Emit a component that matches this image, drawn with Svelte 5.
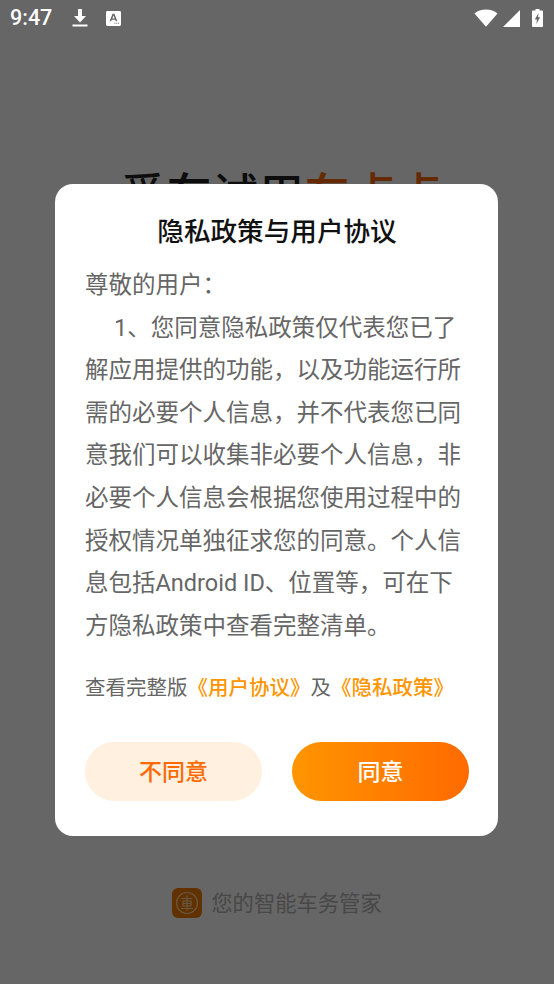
<script>
  const paragraph = '1、您同意隐私政策仅代表您已了解应用提供的功能，以及功能运行所需的必要个人信息，并不代表您已同意我们可以收集非必要个人信息，非必要个人信息会根据您使用过程中的授权情况单独征求您的同意。个人信息包括Android ID、位置等，可在下方隐私政策中查看完整清单。';
</script>

<div class="screen">
  <main class="page">
    <h2 class="headline">爱车试用<span class="accent">车点点</span></h2>
    <footer class="brand">
      <svg class="logo" viewBox="0 0 30 30" aria-hidden="true">
        <rect width="30" height="30" rx="6" fill="#f57c00" />
        <circle cx="15" cy="15" r="10.500" fill="none" stroke="#ffd9a8" stroke-width="1.200" />
        <path d="M9.500 10.500h11M15 7.500v15M11 13h8v5h-8zM11 15.500h8M9 20.500h12" fill="none" stroke="#ffd9a8" stroke-width="1.200" />
      </svg>
      <span>您的智能车务管家</span>
    </footer>
  </main>

  <div class="scrim"></div>

  <header class="status">
    <div class="status-left">
      <span class="time">9:47</span>
      <svg class="dl" viewBox="0 0 16 18" aria-hidden="true">
        <path d="M6 0h4v7h4l-6 6.500L2 7h4zM0.500 15.600h15V17.400H0.500z" fill="#fff" />
      </svg>
      <svg class="note" viewBox="0 0 16 16" aria-hidden="true">
        <path fill-rule="evenodd" d="M1.500 0h13A1.500 1.500 0 0 1 16 1.500v13a1.500 1.500 0 0 1-1.500 1.500h-13A1.500 1.500 0 0 1 0 14.500v-13A1.500 1.500 0 0 1 1.500 0zM7 3 3.800 11h1.700l.6-1.700h3.700l.6 1.700h1.700L9 3zM8 4.900 9.300 8H6.700zM9 12.500h1v1H9zM11 12.500h1v1h-1zM13 12.500h1v1h-1z" fill="#fff" />
      </svg>
    </div>
    <div class="status-right">
      <svg class="wifi" viewBox="0 0 24 18" aria-hidden="true">
        <path d="M0.500 4.600C3.500 2 7.500 0.500 12 0.500s8.500 1.500 11.500 4.100L12 17.800z" fill="#fff" />
      </svg>
      <svg class="signal" viewBox="0 0 17 17" aria-hidden="true">
        <path d="M17 0v17H0z" fill="#fff" />
      </svg>
      <svg class="battery" viewBox="0 0 11 18" aria-hidden="true">
        <path fill-rule="evenodd" d="M3.500 0h4v1.500H10a1 1 0 0 1 1 1V17a1 1 0 0 1-1 1H1a1 1 0 0 1-1-1V2.500a1 1 0 0 1 1-1h2.500zM6.500 4 2.800 10.500h2.200L4.300 15 8.200 8.300H6z" fill="#fff" />
      </svg>
    </div>
  </header>

  <div class="dialog-layer">
    <section class="dialog" role="dialog" aria-label="隐私政策与用户协议">
      <h1 class="title">隐私政策与用户协议</h1>
      <p class="greeting">尊敬的用户：</p>
      <p class="body">{paragraph}</p>
      <p class="links">查看完整版<span class="link">《用户协议》</span>及<span class="link">《隐私政策》</span></p>
      <div class="actions">
        <button class="btn decline" type="button">不同意</button>
        <button class="btn accept" type="button">同意</button>
      </div>
    </section>
  </div>
</div>

<style>
  :global(body) {
    margin: 0;
    background: #fff;
  }

  .screen {
    position: relative;
    width: 554px;
    height: 984px;
    overflow: hidden;
    font-family: Roboto, "Noto Sans CJK SC", sans-serif;
  }

  .page {
    display: flex;
    flex-direction: column;
    align-items: center;
    height: 100%;
    box-sizing: border-box;
    padding-top: 164px;
    padding-left: 8px;
    background: #fff;
  }

  .headline {
    margin: 0;
    font-size: 46px;
    line-height: 62px;
    font-weight: 500;
    color: #222;
    white-space: nowrap;
  }

  .accent {
    color: #ff6a00;
  }

  .brand {
    display: flex;
    align-items: center;
    gap: 9px;
    margin-top: 663px;
    margin-left: -8px;
    font-size: 21.300px;
    line-height: 30px;
    color: #b4b4b4;
  }

  .logo {
    width: 30px;
    height: 30px;
    margin-top: -2px;
  }

  .scrim {
    position: absolute;
    inset: 0;
    background: rgba(0, 0, 0, 0.6);
  }

  .status {
    position: absolute;
    top: 0;
    left: 0;
    right: 0;
    height: 36px;
    display: flex;
    align-items: center;
    justify-content: space-between;
    padding: 0 11px 0 10px;
    color: #fff;
  }

  .status-left,
  .status-right {
    display: flex;
    align-items: center;
  }

  .time {
    font-size: 21.500px;
    font-weight: 500;
    line-height: 36px;
    width: 62px;
  }

  .dl {
    width: 16px;
    height: 18px;
  }

  .note {
    width: 15px;
    height: 15px;
    margin-left: 18px;
  }

  .wifi {
    width: 24px;
    height: 18px;
  }

  .signal {
    width: 17px;
    height: 17px;
    margin-left: 5px;
  }

  .battery {
    width: 11px;
    height: 18px;
    margin-left: 12px;
  }

  .dialog-layer {
    position: absolute;
    inset: 36px 1px 0 0;
    display: flex;
    align-items: center;
    justify-content: center;
  }

  .dialog {
    width: 443px;
    height: 652px;
    box-sizing: border-box;
    padding: 28px 29px 35px 30px;
    display: flex;
    flex-direction: column;
    background: #fff;
    border-radius: 18px;
  }

  .title {
    margin: 0;
    text-align: center;
    font-size: 26.600px;
    line-height: 40px;
    font-weight: 500;
    color: #111;
  }

  .greeting,
  .body {
    margin: 0;
    font-size: 23.500px;
    line-height: 42.600px;
    color: #666;
  }

  .greeting {
    margin-top: 12px;
  }

  .body {
    text-indent: 29px;
  }

  .links {
    margin: 26px 0 0;
    font-size: 20.500px;
    line-height: 30px;
    color: #666;
    white-space: nowrap;
  }

  .link {
    color: #ff9500;
    font-weight: 500;
  }

  .actions {
    display: flex;
    gap: 30px;
    margin-top: auto;
  }

  .btn {
    flex: 1;
    height: 59px;
    border: 0;
    border-radius: 30px;
    padding: 0 0 3px;
    font-family: inherit;
    font-size: 23px;
    font-weight: 500;
  }

  .decline {
    background: #fff0e0;
    color: #ff6a00;
  }

  .accept {
    background: linear-gradient(90deg, #ff9500, #ff6a00);
    color: #fff;
  }
</style>
